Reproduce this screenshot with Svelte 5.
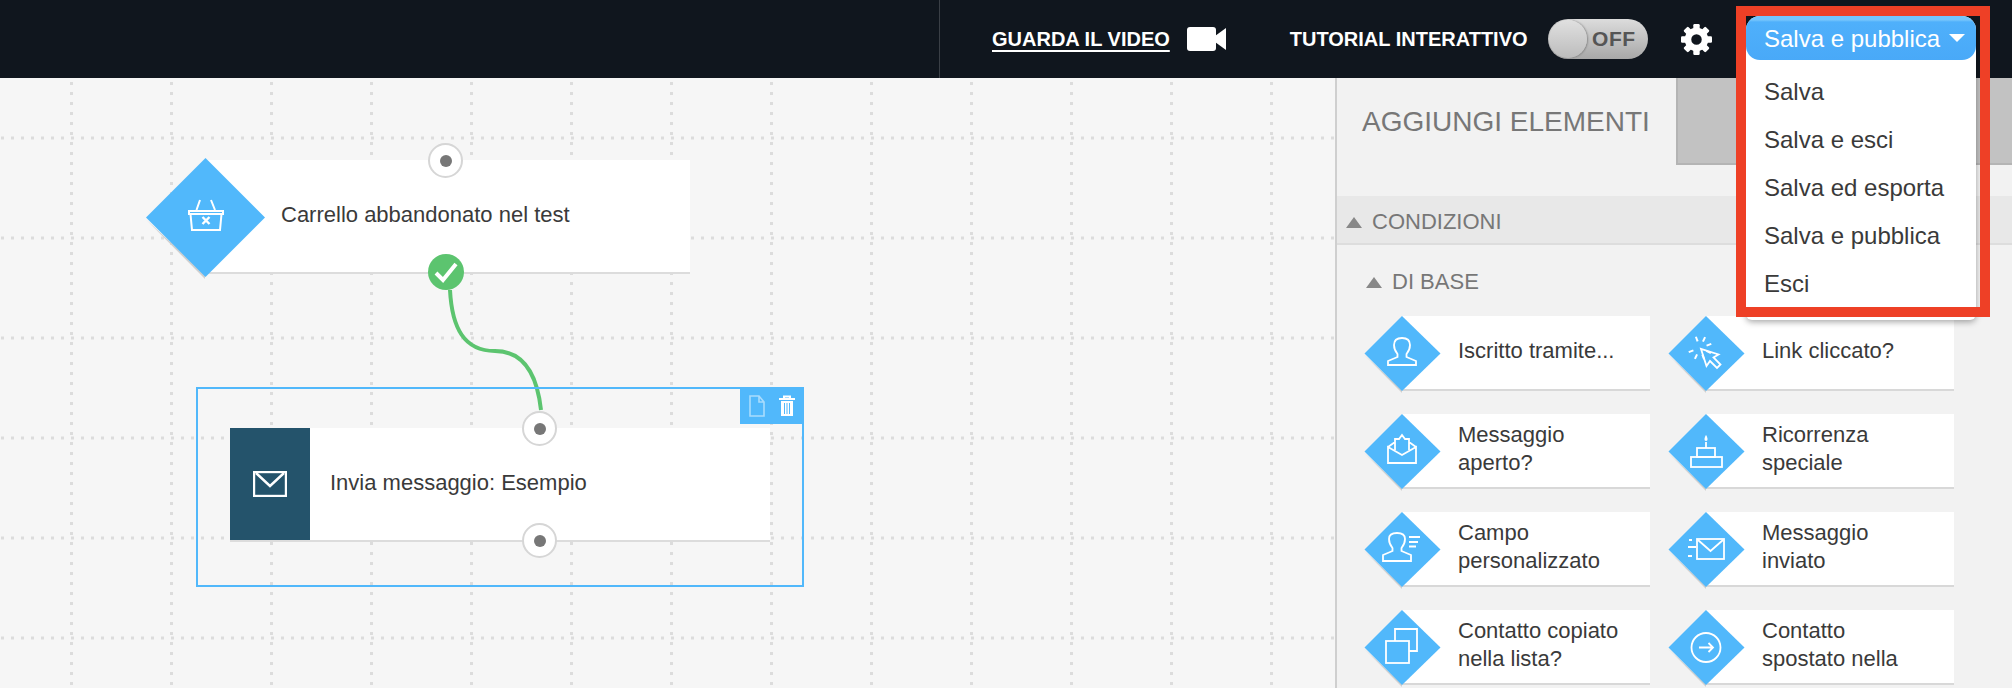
<script lang="ts">
  const menuItems = ['Salva', 'Salva e esci', 'Salva ed esporta', 'Salva e pubblica', 'Esci'];

  const elements = [
    { kind: 'person', label: ['Iscritto tramite...'] },
    { kind: 'link', label: ['Link cliccato?'] },
    { kind: 'opened', label: ['Messaggio', 'aperto?'] },
    { kind: 'cake', label: ['Ricorrenza', 'speciale'] },
    { kind: 'field', label: ['Campo', 'personalizzato'] },
    { kind: 'sent', label: ['Messaggio', 'inviato'] },
    { kind: 'copy', label: ['Contatto copiato', 'nella lista?'] },
    { kind: 'moved', label: ['Contatto', 'spostato nella'] }
  ];

  const rays = [-20, 25, 70, 115, 160, 205, 250];
</script>

<div class="page">
  <header class="topbar">
    <div class="spacer"></div>
    <div class="topbar-actions">
      <a class="video-link" href="#video">GUARDA IL VIDEO</a>
      <svg class="camera" width="39" height="24" viewBox="0 0 39 24">
        <rect x="0" y="0" width="29" height="24" rx="3" fill="#fff" />
        <path d="M28 9 L39 1 V23 L28 15 Z" fill="#fff" />
      </svg>
      <span class="tutorial">TUTORIAL INTERATTIVO</span>
      <div class="toggle">
        <span class="knob"></span>
        <span class="toggle-text">OFF</span>
      </div>
      <svg class="gear" width="31" height="31" viewBox="0 0 31 31">
        <circle cx="15.5" cy="15.5" r="8.5" fill="none" stroke="#fff" stroke-width="6.5" />
        {#each [0, 45, 90, 135, 180, 225, 270, 315] as a}
          <rect x="12.3" y="0" width="6.4" height="6" rx="1.2" fill="#fff" transform="rotate({a} 15.5 15.5)" />
        {/each}
      </svg>
    </div>
  </header>

  <main class="workspace">
    <section class="canvas">
      <svg class="grid" width="1335" height="610">
        <defs>
          <pattern id="dots" width="100" height="100" patternUnits="userSpaceOnUse" x="0" y="-19">
            {#each Array(10) as _, i}
              <rect x="70" y={i * 10 + 3} width="3" height="3" fill="#dcdcdc" />
              <rect x={i * 10 + 1} y="77.5" width="3" height="3" fill="#dcdcdc" />
            {/each}
          </pattern>
        </defs>
        <rect width="1335" height="610" fill="url(#dots)" />
        <path d="M450 212 C452 250 464 273 495 273 C524 273 537 296 541 332" fill="none" stroke="#5cc46f" stroke-width="4" />
      </svg>

      <div class="node trigger-node">
        <svg class="node-diamond" width="122" height="122" viewBox="0 0 122 122">
          <polygon points="0,61.5 59,121 59,116" fill="#cfcfcf" />
          <polygon points="0,59.5 59.5,0 119,59.5 59.5,119" fill="#51b8fb" />
          <g fill="none" stroke="#fff" stroke-width="2">
            <path d="M54 42 L50.5 52 M65 42 L69 52" />
            <path d="M43 53 H77 V56 H43 Z M44.5 56 L46 72 H74 L75.5 56" />
            <path d="M56.5 59 L63.5 66 M63.5 59 L56.5 66" stroke-width="2.4" />
          </g>
        </svg>
        <span class="node-text">Carrello abbandonato nel test</span>
      </div>
      <div class="port port-top-1"><span></span></div>
      <div class="port-ok">
        <svg width="36" height="36" viewBox="0 0 36 36">
          <circle cx="18" cy="18" r="18" fill="#5cc46f" />
          <path d="M8 19 L15 26 L28 10" fill="none" stroke="#fff" stroke-width="4" />
        </svg>
      </div>

      <div class="selection">
        <div class="selection-tools">
          <svg width="18" height="22" viewBox="0 0 18 22">
            <path d="M2 1 H11 L16 7 V21 H2 Z M11 1 V7 H16" fill="none" stroke="#a9dcfd" stroke-width="1.6" />
          </svg>
          <svg width="18" height="22" viewBox="0 0 18 22">
            <path d="M1 4 H17 M6 4 V1.5 H12 V4" fill="none" stroke="#fff" stroke-width="2" />
            <path d="M3 6 H15 V21 H3 Z" fill="#fff" />
            <path d="M6.5 8 V19 M9 8 V19 M11.5 8 V19" stroke="#51b8fb" stroke-width="1" />
          </svg>
        </div>
      </div>
      <div class="node action-node">
        <div class="action-icon">
          <svg width="34" height="26" viewBox="0 0 34 26">
            <rect x="1" y="1" width="32" height="24" fill="none" stroke="#fff" stroke-width="2.4" />
            <path d="M3 2 L17 15 L31 2" fill="none" stroke="#fff" stroke-width="2.4" />
          </svg>
        </div>
        <span class="node-text">Invia messaggio: Esempio</span>
      </div>
      <div class="port port-top-2"><span></span></div>
      <div class="port port-bottom-2"><span></span></div>
    </section>

    <aside class="panel">
      <div class="tabs">
        <div class="tab-active">AGGIUNGI ELEMENTI</div>
        <div class="tab-other"></div>
      </div>
      <div class="section-head"><i class="tri"></i>CONDIZIONI</div>
      <div class="sub-head"><i class="tri"></i>DI BASE</div>
      <div class="element-grid">
        {#each elements as item}
          <div class="element">
            <svg class="element-diamond" width="78" height="78" viewBox="0 0 78 78">
              <polygon points="0,38.5 38,77 38,74" fill="#cfcfcf" />
              <polygon points="0.5,37.5 38,0 76.5,37.5 38,75" fill="#51b8fb" />
              <g fill="none" stroke="#fff" stroke-width="1.8">
                {#if item.kind === 'person'}
                  <path d="M33.5 38 C31 35 30 32 30 29 C30 24 33 22 38 22 C43 22 46 24 46 29 C46 32 45 35 42.5 38 V41 L52 45 V49 H24 V45 L33.5 41 Z" />
                {:else if item.kind === 'opened'}
                  <path d="M24 33 V49 H52 V33 L38 41 Z" />
                  <path d="M24 33 L31 28 M52 33 L45 28 M31 36 V25 H35 L38 21 L41 25 H45 V36" />
                {:else if item.kind === 'field'}
                  <path d="M28.5 36 C26 33 25 30 25 27 C25 23 28 21 33 21 C38 21 41 23 41 27 C41 30 40 33 37.5 36 V39 L47 43 V49 H19 V43 L28.5 39 Z" />
                  <path d="M45 25 H56 M45 30 H54 M45 34.5 H52" />
                {:else if item.kind === 'copy'}
                  <path d="M31 31 V19 H53 V41 H45" />
                  <rect x="22" y="31" width="23" height="22" />
                {:else if item.kind === 'link'}
                  {#each rays as r}
                    <path d="M32 32 m0 -7 v-5" stroke-width="2" transform="rotate({r} 32 32)" />
                  {/each}
                  <path d="M33 33 L38.5 50 L42 45 L49 52 L52.5 48.5 L45.5 41.5 L50.5 38.5 Z" />
                {:else if item.kind === 'cake'}
                  <rect x="23" y="43" width="31" height="10" />
                  <rect x="29" y="34" width="18" height="9" />
                  <path d="M38 34 V28" />
                  <path d="M38 21 C36 24 36 27 38 27 C40 27 40 24 38 21 Z" fill="#fff" stroke="none" />
                {:else if item.kind === 'sent'}
                  <rect x="29" y="27" width="27" height="20" />
                  <path d="M30 28 L42.5 39 L55 28" />
                  <path d="M21 28 H24 M20 35 H28 M20 44 H24" />
                {:else if item.kind === 'moved'}
                  <circle cx="38" cy="37.5" r="14.5" />
                  <path d="M31 37.5 H45 M40.5 33 L45 37.5 L40.5 42" />
                {/if}
              </g>
            </svg>
            <div class="element-label">
              {#each item.label as line}<span>{line}</span>{/each}
            </div>
          </div>
        {/each}
      </div>
    </aside>
  </main>

  <div class="publish-menu">
    <button class="publish-btn">
      <span>Salva e pubblica</span>
      <i class="caret"></i>
    </button>
    <ul>
      {#each menuItems as entry}
        <li>{entry}</li>
      {/each}
    </ul>
  </div>
  <div class="highlight-frame"></div>
</div>

<style>
  :global(body) {
    margin: 0;
    background: #f6f6f6;
  }

  .page {
    position: relative;
    width: 2012px;
    height: 688px;
    overflow: hidden;
    font-family: 'Liberation Sans', Arial, sans-serif;
    color: #3a3a3a;
  }

  .topbar {
    height: 78px;
    background: #10161e;
    display: flex;
  }

  .spacer {
    width: 940px;
    border-right: 1px solid #3a3f46;
    box-sizing: border-box;
  }

  .topbar-actions {
    display: flex;
    align-items: center;
    padding-left: 52px;
    color: #fff;
    font-size: 20px;
    font-weight: 700;
  }

  .video-link {
    color: #fff;
    text-decoration: underline;
    text-underline-offset: 4px;
    text-decoration-thickness: 2px;
  }

  .camera {
    margin-left: 17px;
  }

  .tutorial {
    margin-left: 64px;
  }

  .toggle {
    margin-left: 20px;
    width: 100px;
    height: 40px;
    border-radius: 20px;
    background: linear-gradient(#dcdcdc, #a8a8a8);
    position: relative;
    display: flex;
    align-items: center;
    justify-content: flex-end;
    padding-right: 12px;
    box-sizing: border-box;
  }

  .knob {
    position: absolute;
    left: 1px;
    top: 1px;
    width: 38px;
    height: 38px;
    border-radius: 50%;
    background: linear-gradient(#e0e0e0, #bcbcbc);
    box-shadow: 1px 0 2px rgba(0, 0, 0, 0.3);
  }

  .toggle-text {
    font-size: 21px;
    color: #555;
    letter-spacing: 0.5px;
  }

  .gear {
    margin-left: 33px;
  }

  .workspace {
    display: flex;
    height: 610px;
  }

  .canvas {
    position: relative;
    width: 1335px;
    flex: none;
    background: #f6f6f6;
  }

  .grid {
    position: absolute;
    left: 0;
    top: 0;
  }

  .node {
    position: absolute;
    background: #fff;
    border-bottom: 2px solid #dcdcdc;
    display: flex;
    align-items: center;
    box-sizing: border-box;
    font-size: 22px;
  }

  .trigger-node {
    left: 205px;
    top: 82px;
    width: 485px;
    height: 114px;
    padding-left: 76px;
  }

  .node-diamond {
    position: absolute;
    left: -59px;
    top: -2px;
  }

  .node-text {
    position: relative;
    top: -1px;
  }

  .action-node {
    left: 230px;
    top: 350px;
    width: 540px;
    height: 114px;
  }

  .action-icon {
    width: 80px;
    height: 112px;
    background: #24536b;
    display: flex;
    align-items: center;
    justify-content: center;
    margin-right: 20px;
  }

  .selection {
    position: absolute;
    left: 196px;
    top: 309px;
    width: 608px;
    height: 200px;
    border: 2px solid #51b8fb;
    box-sizing: border-box;
  }

  .selection-tools {
    position: absolute;
    right: -2px;
    top: -2px;
    width: 64px;
    height: 37px;
    background: #51b8fb;
    display: flex;
    align-items: center;
    justify-content: center;
    gap: 12px;
  }

  .port {
    position: absolute;
    width: 35px;
    height: 35px;
    border-radius: 50%;
    background: #fff;
    border: 2px solid #d6d6d6;
    box-sizing: border-box;
    display: flex;
    align-items: center;
    justify-content: center;
  }

  .port span {
    width: 12px;
    height: 12px;
    border-radius: 50%;
    background: #777;
  }

  .port-top-1 {
    left: 428px;
    top: 65px;
  }

  .port-top-2 {
    left: 522px;
    top: 333px;
  }

  .port-bottom-2 {
    left: 522px;
    top: 445px;
  }

  .port-ok {
    position: absolute;
    left: 428px;
    top: 176px;
    height: 36px;
  }

  .panel {
    flex: 1;
    background: #f2f2f2;
    border-left: 2px solid #cfcfcf;
    box-sizing: border-box;
    min-width: 0;
  }

  .tabs {
    display: flex;
    height: 87px;
  }

  .tab-active {
    width: 339px;
    padding: 28px 0 0 25px;
    box-sizing: border-box;
    font-size: 28px;
    color: #777;
    white-space: nowrap;
  }

  .tab-other {
    flex: 1;
    background: #c2c2c2;
    border-left: 2px solid #b4b4b4;
    border-bottom: 2px solid #b4b4b4;
  }

  .section-head {
    margin-top: 31px;
    height: 49px;
    background: #e8e8e8;
    border-bottom: 2px solid #ddd;
    box-sizing: border-box;
    display: flex;
    align-items: center;
    padding: 5px 0 0 9px;
    font-size: 22px;
    color: #777;
  }

  .sub-head {
    display: flex;
    align-items: center;
    height: 26px;
    margin-top: 24px;
    padding-left: 29px;
    font-size: 22px;
    color: #777;
  }

  .tri {
    width: 0;
    height: 0;
    border-left: 8px solid transparent;
    border-right: 8px solid transparent;
    border-bottom: 11px solid #888;
    margin-right: 10px;
  }

  .element-grid {
    display: grid;
    grid-template-columns: 286px 286px;
    column-gap: 18px;
    row-gap: 23px;
    margin: 21px 0 0 27px;
  }

  .element {
    position: relative;
    height: 75px;
    margin-left: 38px;
    background: #fff;
    border-bottom: 2px solid #d8d8d8;
    box-sizing: border-box;
    display: flex;
    align-items: center;
    padding-left: 56px;
    width: 248px;
  }

  .element-diamond {
    position: absolute;
    left: -38px;
    top: 0;
  }

  .element-label {
    display: flex;
    flex-direction: column;
    font-size: 22px;
    line-height: 28px;
    position: relative;
    top: -2px;
    white-space: nowrap;
  }

  .publish-menu {
    position: absolute;
    left: 1746px;
    top: 16px;
    width: 230px;
    height: 304px;
    background: #fff;
    border-radius: 14px 14px 6px 6px;
    box-shadow: 0 2px 6px rgba(0, 0, 0, 0.35);
  }

  .publish-btn {
    width: 230px;
    height: 44px;
    border: 0;
    border-radius: 14px;
    background: linear-gradient(#75c5fc 0, #75c5fc 4px, #4fb0fb 6px, #49a9f8 100%);
    color: #fff;
    font: 24px 'Liberation Sans', Arial, sans-serif;
    padding: 2px 0 0 18px;
    display: flex;
    align-items: center;
    position: relative;
  }

  .caret {
    position: absolute;
    left: 203px;
    top: 18px;
    width: 0;
    height: 0;
    border-left: 8px solid transparent;
    border-right: 8px solid transparent;
    border-top: 8px solid #fff;
  }

  .publish-menu ul {
    list-style: none;
    margin: 8px 0 0;
    padding: 0;
  }

  .publish-menu li {
    height: 48px;
    line-height: 48px;
    padding-left: 18px;
    font-size: 24px;
    color: #3a3a3a;
  }

  .highlight-frame {
    position: absolute;
    left: 1736px;
    top: 6px;
    width: 254px;
    height: 311px;
    border: 10px solid #ee4026;
    box-sizing: border-box;
    pointer-events: none;
  }
</style>
